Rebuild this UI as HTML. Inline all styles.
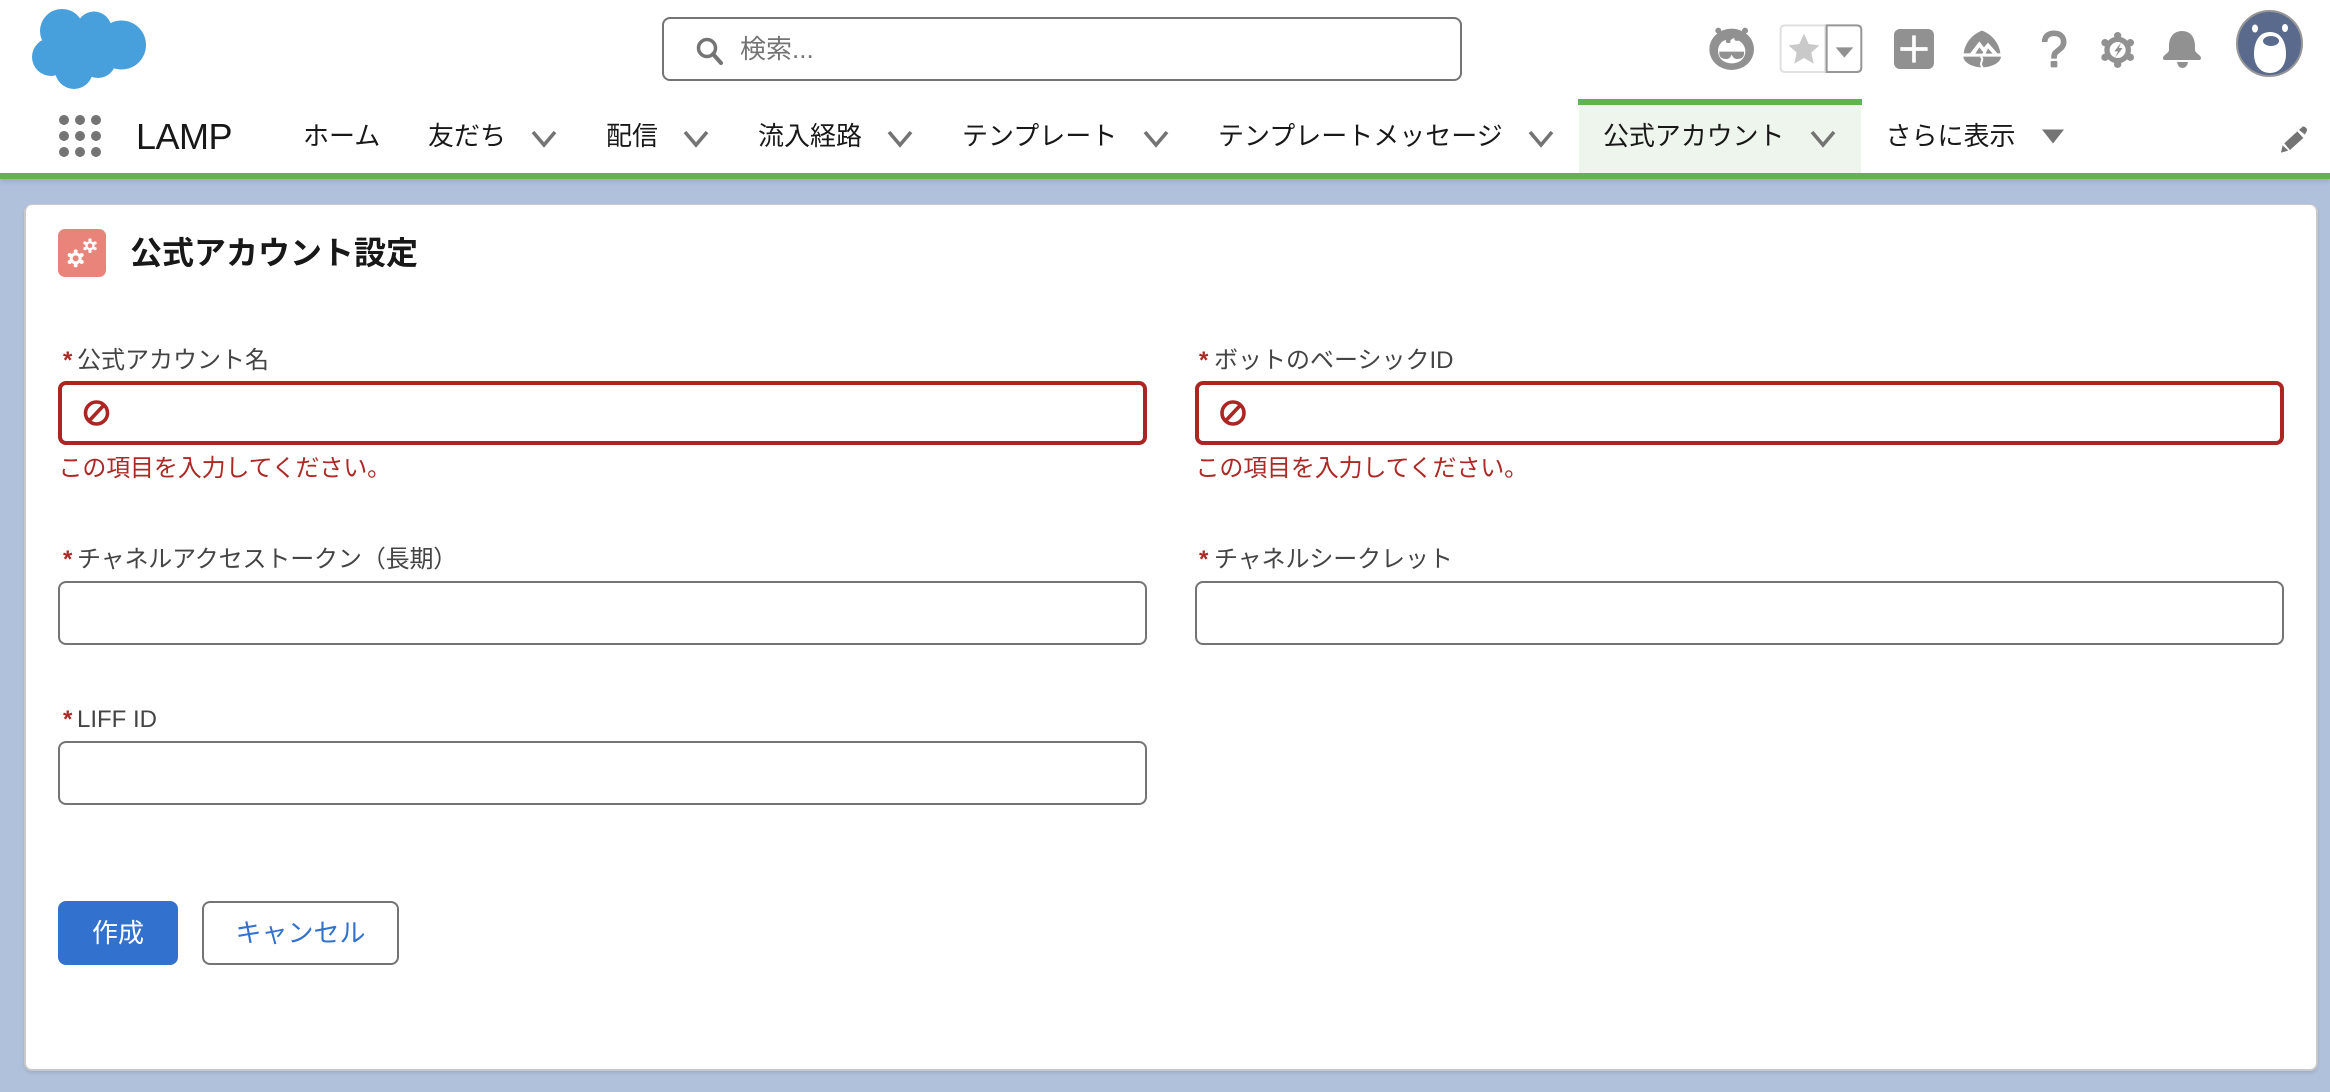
<!DOCTYPE html>
<html lang="ja">
<head>
<meta charset="utf-8">
<title>公式アカウント設定</title>
<style>
html,body{margin:0;padding:0;width:2330px;height:1092px;overflow:hidden;background:#b0c1dc;}
body{position:relative;font-family:"Liberation Sans","Noto Sans CJK JP",sans-serif;color:#181818;}
.a{position:absolute;white-space:nowrap;}
#hdr{left:0;top:0;width:2330px;height:173px;background:#fff;border-bottom:6px solid #60b44c;box-shadow:0 3px 4px rgba(0,0,0,.1);}
#search{left:662px;top:17px;width:796px;height:60px;border:2px solid #747474;border-radius:8px;background:#fff;}
.nav{font-size:26px;line-height:40px;top:116px;color:#181818;}
#tab{left:1579px;top:105px;width:282px;height:68px;background:#eef5ec;}
#tabtop{left:1578px;top:99px;width:284px;height:6px;background:#60b44c;}
#card{left:24px;top:204px;width:2290px;height:864px;background:#fff;border:2px solid #c9c9c9;border-top-width:1px;border-radius:8px;box-shadow:0 2px 3px rgba(0,0,0,.1);}
#title{left:130px;top:230px;font-size:32px;line-height:46px;font-weight:700;color:#181818;}
.lab{font-size:24px;line-height:34px;color:#444;}
.req{font-size:24px;line-height:34px;color:#ab2a25;font-weight:700;}
.inp{box-sizing:border-box;width:1089px;height:64px;border:2px solid #747474;border-radius:8px;background:#fff;}
.err{border:4px solid #ab2622;}
.msg{font-size:24px;line-height:34px;color:#ab2a25;letter-spacing:-.15px;}
.btn{box-sizing:border-box;top:901px;height:64px;border-radius:8px;font-size:26px;line-height:61px;text-align:center;}
</style>
</head>
<body>
<div class="a" id="hdr"></div>
<div class="a" id="search"></div>
<div class="a" style="left:740px;top:30px;font-size:26px;line-height:39px;color:#747474;">検索...</div>

<div class="a" style="left:136px;top:115px;font-size:36px;line-height:44px;color:#181818;letter-spacing:-.5px;">LAMP</div>
<div class="a" id="tabtop"></div>
<div class="a" id="tab"></div>
<div class="a nav" style="left:303px;">ホーム</div>
<div class="a nav" style="left:428px;">友だち</div>
<div class="a nav" style="left:606px;">配信</div>
<div class="a nav" style="left:758px;">流入経路</div>
<div class="a nav" style="left:962px;">テンプレート</div>
<div class="a nav" style="left:1218px;">テンプレートメッセージ</div>
<div class="a nav" style="left:1603px;letter-spacing:-.1px;">公式アカウント</div>
<div class="a nav" style="left:1885.5px;">さらに表示</div>

<div class="a" id="card"></div>
<div class="a" id="title">公式アカウント設定</div>

<div class="a req" style="left:63px;top:344px;">*</div>
<div class="a lab" style="left:77px;top:344px;">公式アカウント名</div>
<div class="a inp err" style="left:58px;top:381px;"></div>
<div class="a msg" style="left:58.5px;top:452px;">この項目を入力してください。</div>

<div class="a req" style="left:1199px;top:344px;">*</div>
<div class="a lab" style="left:1214px;top:344px;">ボットのベーシックID</div>
<div class="a inp err" style="left:1195px;top:381px;"></div>
<div class="a msg" style="left:1195.5px;top:452px;">この項目を入力してください。</div>

<div class="a req" style="left:63px;top:543px;">*</div>
<div class="a lab" style="left:77px;top:543px;letter-spacing:-.15px;">チャネルアクセストークン（長期）</div>
<div class="a inp" style="left:58px;top:581px;"></div>

<div class="a req" style="left:1199px;top:543px;">*</div>
<div class="a lab" style="left:1214px;top:543px;letter-spacing:-.1px;">チャネルシークレット</div>
<div class="a inp" style="left:1195px;top:581px;"></div>

<div class="a req" style="left:63px;top:703px;">*</div>
<div class="a lab" style="left:77px;top:703px;">LIFF ID</div>
<div class="a inp" style="left:58px;top:741px;"></div>

<div class="a btn" style="left:58px;width:120px;background:#3272ce;border:2px solid #3272ce;color:#fff;">作成</div>
<div class="a btn" style="left:202px;width:197px;background:#fff;border:2px solid #747474;color:#3272ce;">キャンセル</div>

<svg class="a" style="left:0;top:0;" width="2330" height="1092" viewBox="0 0 2330 1092" xmlns="http://www.w3.org/2000/svg">
  <!-- cloud -->
  <g fill="#47a0dc">
    <circle cx="62" cy="31" r="22"/><circle cx="94" cy="29" r="17.5"/><circle cx="121.5" cy="45" r="24.5"/>
    <circle cx="51" cy="57" r="19"/><circle cx="74" cy="70" r="19"/><circle cx="98" cy="60" r="18"/>
    <rect x="55" y="30" width="50" height="40"/>
  </g>
  <!-- app launcher -->
  <g fill="#747474">
    <circle cx="64" cy="120" r="5"/><circle cx="80" cy="120" r="5"/><circle cx="96" cy="120" r="5"/>
    <circle cx="64" cy="136" r="5"/><circle cx="80" cy="136" r="5"/><circle cx="96" cy="136" r="5"/>
    <circle cx="64" cy="152" r="5"/><circle cx="80" cy="152" r="5"/><circle cx="96" cy="152" r="5"/>
  </g>
  <!-- search -->
  <circle cx="707" cy="48" r="8.5" fill="none" stroke="#747474" stroke-width="3.5"/>
  <path d="M713 54L721 63" stroke="#747474" stroke-width="4" stroke-linecap="round"/>
  <!-- nav chevrons -->
  <g fill="none" stroke="#747474" stroke-width="3.6">
    <path d="M533 132L544 145L555 132"/><path d="M685 132L696 145L707 132"/><path d="M889 132L900 145L911 132"/>
    <path d="M1145 132L1156 145L1167 132"/><path d="M1530 132L1541 145L1552 132"/><path d="M1812 132L1823 145L1834 132"/>
  </g>
  <path d="M2042 129.5H2064L2053 143.5Z" fill="#747474"/>
  <!-- pencil -->
  <g transform="translate(1980 90) scale(.3333)" fill="#747474">
    <path d="M903 188L908 166L925 182Z"/>
    <path d="M913 160L952 124L970 144L930 180Z"/>
    <path d="M957 120L968 110Q974 108 980 116Q983 122 978 127L975 134Z"/>
  </g>
  <!-- einstein, star, plus -->
  <g transform="translate(1690 10) scale(.3333)">
    <circle cx="85" cy="62" r="9" fill="#919191"/><circle cx="165" cy="62" r="9" fill="#919191"/>
    <ellipse cx="125" cy="118" rx="67" ry="62" fill="#919191"/>
    <path d="M84 122C84 105 96 92 108 90C106 98 112 102 122 98C118 90 126 86 134 84C130 92 140 94 146 92C158 98 166 110 166 124C166 146 148 160 125 160C102 160 84 146 84 122Z" fill="#fff"/>
    <path d="M88 125H162V131C162 143 152 147 142 147C132 147 128 141 125 133C122 141 118 147 108 147C98 147 88 143 88 131Z" fill="#919191"/>
    <path d="M285 46H406V186H285Q272 186 272 173V59Q272 46 285 46Z" fill="#fff" stroke="#e0e0e0" stroke-width="6"/>
    <path d="M410 46H500Q514 46 514 60V172Q514 186 500 186H410Z" fill="#fff" stroke="#969696" stroke-width="6"/>
    <path d="M342 71L356 102L388 106L364 128L371 161L342 144L313 161L320 128L296 106L328 102Z" fill="#c9c9c9"/>
    <path d="M437 112H490L463 143Z" fill="#919191"/>
    <rect x="612" y="57" width="120" height="120" rx="18" fill="#919191"/>
    <path d="M631 117H713M672 76V158" stroke="#fff" stroke-width="11"/>
  </g>
  <!-- trailhead, help, setup -->
  <g transform="translate(1950 10) scale(.3333)">
    <path d="M96 62C118 70 146 92 151 130H41C46 92 74 70 96 62Z" fill="#919191"/>
    <path d="M60 131L88 94L102 112L114 98L143 131Z" fill="#fff"/>
    <path d="M76 131L88 112L100 127L97 131Z" fill="#919191"/>
    <path d="M107 131L114 115L128 131Z" fill="#919191"/>
    <path d="M40 140H153C152 158 125 172 96 172C67 172 41 158 40 140Z" fill="#919191"/>
    <path d="M92 140C106 150 84 158 98 172" fill="none" stroke="#fff" stroke-width="6"/>
    <path d="M284 96C284 76 298 70 313 70C330 70 341 80 341 96C341 112 328 118 319 126C313 130 312 136 312 146" fill="none" stroke="#919191" stroke-width="17"/>
    <rect x="302" y="153" width="20" height="19" rx="3" fill="#919191"/>
    <g fill="#919191">
      <circle cx="503" cy="120" r="40"/>
      <circle cx="503" cy="77" r="11"/><circle cx="503" cy="163" r="11"/>
      <circle cx="465" cy="98" r="11"/><circle cx="541" cy="98" r="11"/>
      <circle cx="465" cy="142" r="11"/><circle cx="541" cy="142" r="11"/>
    </g>
    <circle cx="503" cy="120" r="24" fill="#fff"/>
    <path d="M513 98L493 124H504L496 142L518 114H507Z" fill="#919191"/>
  </g>
  <!-- bell -->
  <path d="M2182 31C2191 31 2195 38 2195 46V50C2195 53 2201 55 2201 58Q2201 60 2199 60H2165Q2163 60 2163 58C2163 55 2169 53 2169 50V46C2169 38 2173 31 2182 31Z" fill="#919191"/>
  <path d="M2177 62H2188Q2187 68 2182.5 68Q2178 68 2177 62Z" fill="#919191"/>
  <!-- avatar -->
  <circle cx="2269.5" cy="43.5" r="32.5" fill="#5a6a8c" stroke="#969696" stroke-width="2"/>
  <ellipse cx="2255" cy="28.5" rx="3" ry="4" fill="#fff"/><ellipse cx="2285" cy="28" rx="3" ry="4" fill="#fff"/>
  <path d="M2270 32C2281 32 2286 42 2286 54C2286 66 2279 73 2270 73C2261 73 2254 66 2254 54C2254 42 2259 32 2270 32Z" fill="#fff"/>
  <ellipse cx="2271" cy="41" rx="8" ry="5" fill="#5a6a8c"/>
  <!-- card icon -->
  <rect x="58" y="229" width="48" height="48" rx="7" fill="#e8847a"/>
  <g transform="translate(40 215) scale(.3333)">
    <g fill="#fff">
      <circle cx="107" cy="130" r="18"/>
      <circle cx="107" cy="109" r="6"/><circle cx="107" cy="151" r="6"/>
      <circle cx="89" cy="120" r="6"/><circle cx="125" cy="120" r="6"/>
      <circle cx="89" cy="141" r="6"/><circle cx="125" cy="141" r="6"/>
      <circle cx="150" cy="92" r="14"/>
      <circle cx="150" cy="75" r="5"/><circle cx="150" cy="109" r="5"/>
      <circle cx="135" cy="84" r="5"/><circle cx="165" cy="84" r="5"/>
      <circle cx="135" cy="101" r="5"/><circle cx="165" cy="101" r="5"/>
    </g>
    <circle cx="107" cy="130" r="9" fill="#e8847a"/>
    <circle cx="150" cy="92" r="7" fill="#e8847a"/>
  </g>
  <!-- error icons -->
  <g fill="none" stroke="#ab2622" stroke-width="3.6">
    <circle cx="96.5" cy="413" r="11"/><path d="M89 421L104 405"/>
    <circle cx="1233" cy="413" r="11"/><path d="M1225.5 421L1240.5 405"/>
  </g>
</svg>
</body>
</html>
